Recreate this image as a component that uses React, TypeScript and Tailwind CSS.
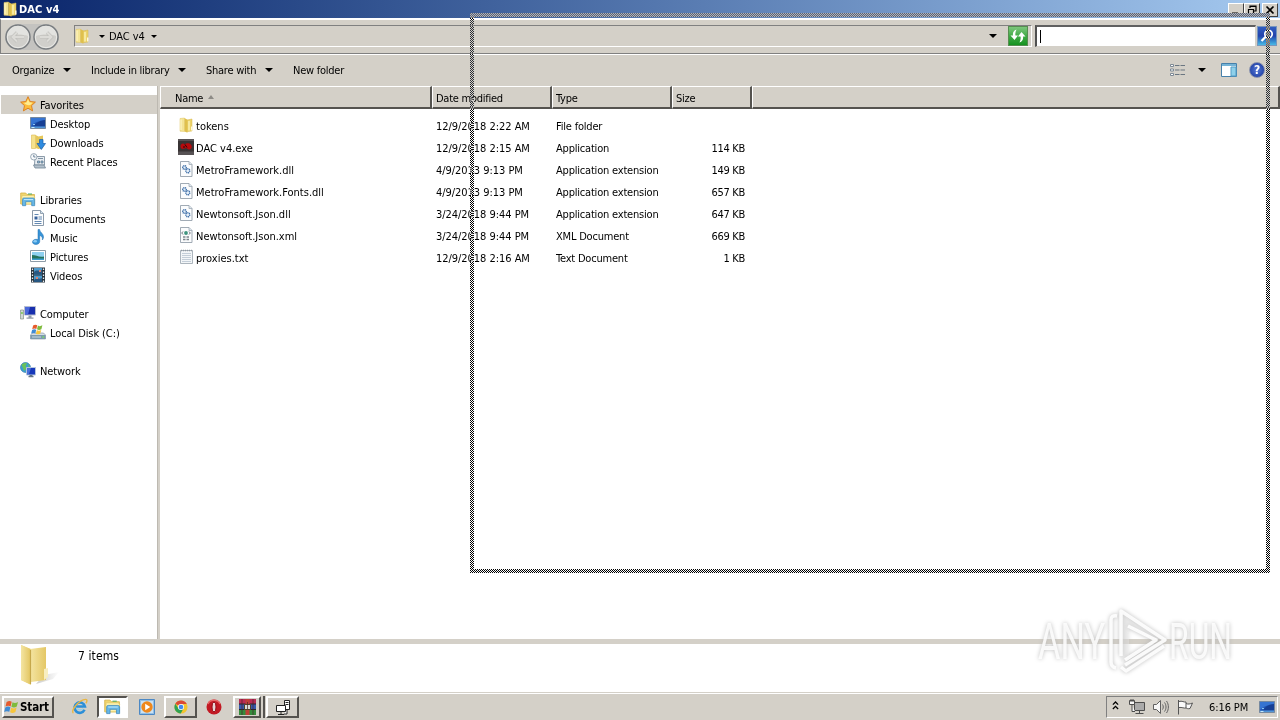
import React from 'react';

type IconProps = { className?: string };

const FolderIcon: React.FC<IconProps> = ({ className = 'size-4' }) => (
  <svg viewBox="0 0 16 16" className={`${className} shrink-0`}>
    <path d="M8 3.2 14 2v12l-6 .8z" fill="#ecd36c" stroke="#d5b548" strokeWidth=".5" />
    <path d="M2 1.5 6.5 1v13.5L2 14.2z" fill="#f4e495" stroke="#e0c560" strokeWidth=".5" />
    <path d="M6.5 1 9.5 2.8v12.6l-3-1z" fill="#dfc04d" />
    <path d="M3 2.5v10.5" stroke="#fff8cd" strokeWidth="1" />
    <path d="M11 4v9.500" stroke="#faf0b0" strokeWidth="1.500" />
    <path d="M13 9.500h1.500v4H13z" fill="#fff8dc" />
  </svg>
);

const StarIcon = () => (
  <svg viewBox="0 0 16 16" className="size-4 shrink-0">
    <path d="m8 .7 2.200 4.800 5.200.6-3.900 3.500 1.100 5.300L8 12.200l-4.600 2.700 1.100-5.300L.6 6.100l5.200-.6z" fill="#fcbc3c" stroke="#d97a1c" strokeWidth=".9" />
    <path d="m8 3 1.400 3.300 3.300.5-2.500 2.200-1.800.2L6 8.500 4 7l2.500-.5z" fill="#ffed91" />
  </svg>
);

const DesktopIcon = () => (
  <svg viewBox="0 0 16 16" className="size-4 shrink-0">
    <path d="M.5 2.500h15v11H.5z" fill="#2257b5" stroke="#76899f" />
    <path d="M1 3h14v3C9 5 4 8 1 11z" fill="#3674d2" />
    <path d="M4 11.500c2-4 6-6 11-6.500v6.500z" fill="#173f94" />
    <path d="M1 11.500h14V13H1z" fill="#5296d8" />
    <path d="M1.500 12.500h3" stroke="#c5e9fc" />
    <path d="M3 9.500h2" stroke="#8cc4f2" />
  </svg>
);

const DownloadsIcon = () => (
  <svg viewBox="0 0 16 16" className="size-4 shrink-0">
    <path d="M1.500 1h4v13.500h-4z" fill="#f5e28d" stroke="#dcbb52" strokeWidth=".6" />
    <path d="m5.500 1 3 1.500V15l-3-1zM8.500 2.500 13 1.500V14l-4.500 1z" fill="#e5c75b" />
    <path d="M9.500 5.500h3.500v4h2.500L11.300 15.500 7 9.500h2.500z" fill="#2f8be0" stroke="#1b5ea8" strokeWidth=".7" />
  </svg>
);

const RecentIcon = () => (
  <svg viewBox="0 0 16 16" className="size-4 shrink-0">
    <path d="M5 3.500h9.500v8.500h-10z" fill="#e8edf2" stroke="#728596" strokeWidth=".8" />
    <path d="M3.500 12h10.500l1.500 3H5z" fill="#b3c0cc" stroke="#728596" strokeWidth=".8" />
    <path d="M8 5.500h5M7.500 8h2v2h-2zM11 8h2v2h-2z" fill="#92bfdf" stroke="#657b8e" strokeWidth=".8" />
    <circle cx="3.800" cy="3.800" r="3.200" fill="#f8fafc" stroke="#8395a4" strokeWidth=".8" />
    <path d="M3.800 1.800v2.200h1.700" fill="none" stroke="#496682" strokeWidth=".8" />
  </svg>
);

const LibraryIcon: React.FC<IconProps> = ({ className = 'size-4' }) => (
  <svg viewBox="0 0 16 16" className={`${className} shrink-0`}>
    <path d="M.7 2h5l1.200 1.500h7.600V13H.7z" fill="#f0d56f" stroke="#d5b347" strokeWidth=".8" />
    <path d="M2 4.500h11.500l1.200 1.500-.7 7H1.500z" fill="#fcf2ae" stroke="#dfc35d" strokeWidth=".6" />
    <path d="M8 3h4" stroke="#4cab64" />
    <path d="M2.500 8.500c0-1 .6-1.500 1.500-1.500h9c1 0 1.700.6 1.700 1.500v6.200h-3v-4h-6v4H2.500z" fill="#66b7e7" stroke="#3c86b9" strokeWidth=".7" />
    <path d="M4 8.500h9" stroke="#b9e6fb" />
  </svg>
);

const DocumentIcon = () => (
  <svg viewBox="0 0 16 16" className="size-4 shrink-0">
    <path d="M2.500.5h8l3 3v12h-11z" fill="#fcfdfe" stroke="#7e8fa0" strokeWidth=".9" />
    <path d="M10.500.5v3h3" fill="#d4e4f1" stroke="#7e8fa0" strokeWidth=".8" />
    <path d="M4.500 4.500h4M8.500 7h3.500M8.500 9h3.500M4.500 11.500h7M4.500 13.500h7" stroke="#6288b2" />
    <path d="M4.500 6.500h3v3h-3z" fill="#345f9b" />
  </svg>
);

const MusicIcon = () => (
  <svg viewBox="0 0 16 16" className="size-4 shrink-0">
    <path d="M8 .5h1.600c.3 3 4 4 3.900 7.500 0 1.500-.7 2.400-1.200 3 .5-3-.8-4-2.600-4.500v6c0 1.800-1.700 3-3.800 3-2 0-3.400-1-3.400-2.500s1.600-2.700 3.500-2.700c.8 0 1.500.1 2 .4z" fill="#3794d8" stroke="#1f6daf" strokeWidth=".5" />
    <ellipse cx="5.200" cy="12.300" rx="1.800" ry="1.200" fill="#8bcaf3" />
  </svg>
);

const PictureIcon = () => (
  <svg viewBox="0 0 16 16" className="size-4 shrink-0">
    <path d="M.5 2.500h15v11H.5z" fill="#fff" stroke="#8e9ca7" />
    <path d="M2 4h12v8H2z" fill="#8fd0ef" />
    <path d="M2 7c4 0 7 2.500 12 1.500V12H2z" fill="#25735c" />
    <path d="M2 10.500h12V12H2z" fill="#3b9cce" />
  </svg>
);

const VideoIcon = () => (
  <svg viewBox="0 0 16 16" className="size-4 shrink-0">
    <path d="M1 .5h14v15H1z" fill="#26323c" />
    <path d="M4 1h8v6.500H4zM4 8.500h8V15H4z" fill="#4d9acb" />
    <path d="M4 5c3-3 5 0 8-2v4.500H4zM4 13c3-3 5 0 8-2v4H4z" fill="#275782" />
    <path d="M9 3h2v2H9zM6 10h2v2H6z" fill="#d78272" />
    <path d="M2.500 1.500v14M13.500 1.500v14" stroke="#e8edf2" strokeWidth="1.300" strokeDasharray="1.500 1.500" />
  </svg>
);

const ComputerIcon = () => (
  <svg viewBox="0 0 16 16" className="size-4 shrink-0">
    <path d="M.5 5h3v9h-3z" fill="#d2d9d5" stroke="#849386" strokeWidth=".7" />
    <path d="M1.200 7h1.500v2H1.200z" fill="#79c952" />
    <path d="M4.500 1.500h11v8.500h-11z" fill="#182fae" stroke="#b7bed0" />
    <path d="M5 2h5L8 9.500H5z" fill="#4a68da" />
    <path d="M8.500 10.500h3v2h-3zM6.500 12.500h7v1.200h-7z" fill="#929caa" />
  </svg>
);

const WindowsFlag: React.FC<IconProps> = ({ className = 'size-4' }) => (
  <svg viewBox="0 0 16 16" className={`${className} shrink-0`}>
    <path d="M2.600 3c2-1.300 3.700-1.100 5.100-.2L6.600 7.400C5 6.500 3.400 6.500 1.500 7.600z" fill="#e65b2c" />
    <path d="M8.500 3.200c1.600.9 3.400 1 5.500-.3l-1.200 4.700c-2 1.200-3.800 1.100-5.400.2z" fill="#7fbb3d" />
    <path d="M1.300 8.500c1.900-1.200 3.500-1.100 5.100-.2l-1.100 4.500C3.700 12 2 12 .2 13z" fill="#3f8bd4" />
    <path d="M7.200 8.700c1.600.9 3.400 1 5.400-.2l-1.200 4.600c-2 1.200-3.800 1.100-5.300.2z" fill="#f6c53c" />
  </svg>
);

const DiskIcon = () => (
  <span className="relative block size-4 shrink-0">
    <svg viewBox="0 0 16 16" className="size-4">
      <path d="m2.500 9-2 2v4h15v-4l-2-2z" fill="#d4dde5" stroke="#7e8c9a" strokeWidth=".6" />
      <path d="M.5 11h15v4H.5z" fill="#7d9bae" />
      <path d="M2 13h9" stroke="#c7d8e3" />
      <path d="M12.500 12.300h1.600v1.500h-1.600z" fill="#78e05a" />
    </svg>
    <WindowsFlag className="absolute left-px top-[-1px] size-[13px]" />
  </span>
);

const NetworkIcon = () => (
  <svg viewBox="0 0 16 16" className="size-4 shrink-0">
    <circle cx="5.500" cy="5.500" r="5" fill="#3c9ed1" stroke="#2770a3" strokeWidth=".6" />
    <path d="M1.500 3C3 1 6 .7 7 1.500L5.500 4 7 6l-3 3-1-3zM8 2l2 2-1 2z" fill="#6ac15b" />
    <path d="M6.500 5.500h9V13h-9z" fill="#1738ba" stroke="#b6c6dd" />
    <path d="M7 6h4l-2 6H7z" fill="#476eda" />
    <path d="M9.500 13h3v1h1v1.300h-5V14h1z" fill="#647586" />
  </svg>
);

const ExeIcon = () => (
  <svg viewBox="0 0 16 16" className="size-4 shrink-0">
    <path d="M0 0h16v16H0z" fill="#383334" />
    <path d="M0 0h16v2H0zM0 12.500h16V16H0z" fill="#575254" />
    <path d="M2.500 8C2 5 5 3.500 7 5.500c1-1.500 5-2 6.500 1 .8 2-.5 4-2.500 4-1.500 0-2-1.500-3-1.500s-1.500 1-3 1c-1.300 0-2.300-.8-2.500-2z" fill="#b80a0d" />
    <path d="m7 5.500 2 3M5 8h2" stroke="#2a0507" strokeWidth="1" fill="none" />
  </svg>
);

const SheetIcon: React.FC<{ kind: 'dll' | 'xml' }> = ({ kind }) => (
  <svg viewBox="0 0 16 16" className="size-4 shrink-0">
    <path d="M2.500.5h8.500l3 3v12H2.500z" fill="#fbfcfd" stroke="#96a2ad" strokeWidth=".9" />
    <path d="M11 .5v3h3" fill="#dce5ed" stroke="#96a2ad" strokeWidth=".7" />
    {kind === 'dll' ? (
      <g fill="#e4eef8" stroke="#4272aa">
        <circle cx="6.500" cy="6.500" r="1.800" strokeWidth="1.400" strokeDasharray="1.100 .5" />
        <circle cx="9.800" cy="9.800" r="2" strokeWidth="1.400" strokeDasharray="1.100 .5" />
      </g>
    ) : (
      <g fill="none">
        <path d="m5 4.500-1.300 1.500L5 7.500M11 4.500l1.300 1.500L11 7.500" stroke="#696f7b" />
        <circle cx="8" cy="6" r="1.900" fill="#3f947f" />
        <path d="M5 10h6M5 12.500h6" stroke="#7d858d" strokeWidth="1.400" strokeDasharray="2.500 1" />
      </g>
    )}
  </svg>
);

const TextFileIcon = () => (
  <svg viewBox="0 0 16 16" className="size-4 shrink-0">
    <path d="M2.500 1.500h12v13h-12z" fill="#f3f6f8" stroke="#a3adb6" strokeWidth=".9" />
    <path d="M3 1.500h11" stroke="#929ba3" strokeWidth="1.500" strokeDasharray="1 1" />
    <path d="M4 4.500h9M4 6.500h9M4 8.500h9M4 10.500h9M4 12.500h9" stroke="#c4ced8" />
  </svg>
);

const Caret: React.FC<{ small?: boolean }> = ({ small }) => (
  <svg viewBox="0 0 8 4" className={small ? 'h-[3px] w-[6px] shrink-0' : 'h-[4px] w-[8px] shrink-0'}>
    <path d="M0 0h8L4 4z" fill="#000" />
  </svg>
);

const HistoryButton: React.FC<{ flip?: boolean }> = ({ flip }) => (
  <svg viewBox="0 0 26 26" className="size-[26px] shrink-0">
    <circle cx="13" cy="13" r="12" fill="#d0cfcb" stroke="#797d80" strokeWidth="1.500" />
    <circle cx="13" cy="13" r="10.700" fill="none" stroke="#f0f0ee" strokeWidth=".8" />
    <path d="M2.800 12a10.200 10 0 0 1 20.400 0c-5-2-15-2-20.400 0z" fill="#e3e3e0" />
    <path d={flip ? 'M7 13h11M14 8.500l4.500 4.500-4.500 4.500' : 'M19 13H8M12 8.500 7.500 13l4.500 4.500'} fill="none" stroke="#bfbfbb" strokeWidth="3.200" />
    <path d={flip ? 'M7 13h11M14 8.500l4.500 4.500-4.500 4.500' : 'M19 13H8M12 8.500 7.500 13l4.500 4.500'} fill="none" stroke="#dcdbd7" strokeWidth="2" />
  </svg>
);

const navItems: { label: string; icon: React.ReactNode; level: number; active?: boolean }[][] = [
  [
    { label: 'Favorites', icon: <StarIcon />, level: 0, active: true },
    { label: 'Desktop', icon: <DesktopIcon />, level: 1 },
    { label: 'Downloads', icon: <DownloadsIcon />, level: 1 },
    { label: 'Recent Places', icon: <RecentIcon />, level: 1 },
  ],
  [
    { label: 'Libraries', icon: <LibraryIcon />, level: 0 },
    { label: 'Documents', icon: <DocumentIcon />, level: 1 },
    { label: 'Music', icon: <MusicIcon />, level: 1 },
    { label: 'Pictures', icon: <PictureIcon />, level: 1 },
    { label: 'Videos', icon: <VideoIcon />, level: 1 },
  ],
  [
    { label: 'Computer', icon: <ComputerIcon />, level: 0 },
    { label: 'Local Disk (C:)', icon: <DiskIcon />, level: 1 },
  ],
  [{ label: 'Network', icon: <NetworkIcon />, level: 0 }],
];

const files = [
  { name: 'tokens', date: '12/9/2018 2:22 AM', type: 'File folder', size: '', icon: <FolderIcon /> },
  { name: 'DAC v4.exe', date: '12/9/2018 2:15 AM', type: 'Application', size: '114 KB', icon: <ExeIcon /> },
  { name: 'MetroFramework.dll', date: '4/9/2013 9:13 PM', type: 'Application extension', size: '149 KB', icon: <SheetIcon kind="dll" /> },
  { name: 'MetroFramework.Fonts.dll', date: '4/9/2013 9:13 PM', type: 'Application extension', size: '657 KB', icon: <SheetIcon kind="dll" /> },
  { name: 'Newtonsoft.Json.dll', date: '3/24/2018 9:44 PM', type: 'Application extension', size: '647 KB', icon: <SheetIcon kind="dll" /> },
  { name: 'Newtonsoft.Json.xml', date: '3/24/2018 9:44 PM', type: 'XML Document', size: '669 KB', icon: <SheetIcon kind="xml" /> },
  { name: 'proxies.txt', date: '12/9/2018 2:16 AM', type: 'Text Document', size: '1 KB', icon: <TextFileIcon /> },
];

const TitleBar = () => (
  <div className="flex h-[18px] shrink-0 items-center bg-linear-to-r from-[#0a246a] to-[#a6caf0] pl-[2px] pr-[2px]">
    <FolderIcon />
    <span className="ml-px text-[11px] font-bold tracking-[0.1px] text-white">DAC v4</span>
    <div className="ml-auto mt-px flex h-[14px]">
      {['min', 'restore', 'close'].map((kind) => (
        <div
          key={kind}
          className={`flex h-[14px] w-4 items-center justify-center border border-t-white border-l-white border-r-[#404040] border-b-[#404040] bg-[#d4d0c8] ${kind === 'close' ? 'ml-[2px]' : ''}`}
        >
          <svg viewBox="0 0 12 12" className="size-3" fill="none" stroke="#000">
            {kind === 'min' && <path d="M2 9.500h6" strokeWidth="2" />}
            {kind === 'restore' && <path d="M4 4V2h6v5H8M4 2.500h6M2 5.500h6M2.500 5v5h5V5" strokeWidth="1.200" />}
            {kind === 'close' && <path d="m2.500 2.500 7 7M9.500 2.500l-7 7" strokeWidth="1.700" />}
          </svg>
        </div>
      ))}
    </div>
  </div>
);

const AddressBar = () => (
  <div className="flex h-9 shrink-0 items-center border-b border-l border-t-2 border-b-[#808080] border-l-[#808080] border-t-white pl-1 pr-[2px]">
    <div className="flex w-[54px] shrink-0 rounded-full bg-[#c4c3c0]">
      <HistoryButton />
      <span className="ml-[2px]"><HistoryButton flip /></span>
    </div>
    <div className="ml-[15px] mb-px flex h-[22px] w-[958px] shrink-0 items-center border border-b-white border-l-[#808080] border-r-white border-t-[#808080]">
      <span className="-ml-px flex"><FolderIcon /></span>
      <span className="ml-[9px] flex"><Caret small /></span>
      <span className="ml-[4px] w-[38px]">DAC v4</span>
      <span className="ml-[4px] flex"><Caret small /></span>
      <span className="ml-auto mr-[34px] flex"><Caret /></span>
    </div>
    <div className="-ml-[24px] mb-px flex h-5 w-5 shrink-0 items-center justify-center border border-[#568d50] bg-linear-to-b from-[#7cc67c] via-[#3fab45] to-[#12921f]">
      <svg viewBox="0 0 18 18" className="size-[18px]" fill="#fff">
        <path d="M7.500 2.500C4.500 3.500 3.500 6 4 8.500H1.500L5.500 13l3.500-4.500H6.500C6 6.500 6.500 4.500 7.500 2.500zM10.500 15.500c3-1 4-3.500 3.500-6h2.500L12.500 5 9 9.500h2.500c.5 2 0 4-1 6z" />
      </svg>
    </div>
    <div className="ml-[7px] mb-px flex h-[22px] w-[221px] shrink-0 items-center border-b border-l-2 border-r border-t-2 border-b-[#d4d0c8] border-l-[#505050] border-r-[#d4d0c8] border-t-[#606060] bg-white">
      <span className="ml-[3px] h-[13px] w-px bg-black" />
    </div>
    <div className="ml-px mb-px flex h-5 w-5 shrink-0 items-center justify-center border border-[#7796bd] bg-linear-to-b from-[#305dc0] via-[#2443ac] to-[#49bae6]">
      <svg viewBox="0 0 18 18" className="size-[18px]" fill="none" stroke="#fff">
        <circle cx="10.500" cy="7" r="3.700" strokeWidth="1.700" />
        <path d="m7.700 9.700-4.200 4.300" strokeWidth="2.300" />
      </svg>
    </div>
  </div>
);

const Toolbar = () => (
  <div className="flex h-8 shrink-0 items-center border-t border-t-white pb-px pl-3 tracking-[-0.25px]">
    <span className="w-[44px]">Organize</span>
    <span className="ml-[7px] flex"><Caret /></span>
    <span className="ml-[20px] w-[80px]">Include in library</span>
    <span className="ml-[7px] flex"><Caret /></span>
    <span className="ml-[20px] w-[52px]">Share with</span>
    <span className="ml-[7px] flex"><Caret /></span>
    <span className="ml-[20px]">New folder</span>
    <div className="ml-auto mr-[15px] flex items-center">
      <svg viewBox="0 0 16 14" className="h-[14px] w-4" fill="none">
        <path d="M.5 1.500h3v2h-3zM.5 6h3v2h-3zM.5 10.500h3v2h-3z" fill="#fff" stroke="#7d8995" />
        <path d="M5 2.500h4.500M10.500 2.500H15M5 7h4.500M10.500 7H15M5 11.500h4.500M10.500 11.500H15" stroke="#6a7681" />
      </svg>
      <span className="ml-[12px] flex"><Caret /></span>
      <svg viewBox="0 0 16 14" className="ml-[15px] h-[14px] w-4">
        <path d="M.5.500h15v13H.5z" fill="#fff" stroke="#4680aa" />
        <path d="M1 1h14v2H1z" fill="#75b4d7" />
        <path d="M10 4h5v9h-5z" fill="#8ed0ea" stroke="#529bc4" />
      </svg>
      <div className="ml-[12px] flex size-4 items-center justify-center rounded-full border border-[#8790ae] bg-radial from-[#5577d5] to-[#16339b] text-[12px] font-bold leading-none text-white">?</div>
    </div>
  </div>
);

const NavigationPane = () => (
  <div className="flex w-[157px] shrink-0 flex-col gap-[19px] bg-white pt-[9px]">
    {navItems.map((group, index) => (
      <div key={index}>
        {group.map((item) => (
          <div
            key={item.label}
            className={`ml-px flex h-[19px] items-center gap-1 ${item.level ? 'pl-[29px]' : 'pl-[19px]'} ${item.active ? 'bg-[#d4d0c8]' : ''}`}
          >
            <span className="-mt-px flex">{item.icon}</span>
            <span className="pt-[2px]">{item.label}</span>
          </div>
        ))}
      </div>
    ))}
  </div>
);

const HeaderCell: React.FC<{ className: string; children?: React.ReactNode }> = ({ className, children }) => (
  <div className={`flex items-center border-b-2 border-l border-t border-b-[#55534f] border-l-white border-t-white pt-[2px] tracking-[-0.25px] ${className}`}>{children}</div>
);

const FileList = () => (
  <div className="flex min-w-0 grow flex-col bg-white">
    <div className="flex h-[23px] shrink-0 bg-[#d4d0c8]">
      <HeaderCell className="w-[272px] border-r-2 border-r-[#55534f] pl-[14px]">
        Name
        <svg viewBox="0 0 6 4" className="ml-[5px] mb-[3px] h-[4px] w-[6px]"><path d="M3 0 6 4H0z" fill="#8d8b86" /></svg>
      </HeaderCell>
      <HeaderCell className="w-[120px] border-r-2 border-r-[#55534f] pl-[3px]">Date modified</HeaderCell>
      <HeaderCell className="w-[120px] border-r-2 border-r-[#55534f] pl-[3px]">Type</HeaderCell>
      <HeaderCell className="w-[80px] border-r-2 border-r-[#55534f] pl-[3px]">Size</HeaderCell>
      <HeaderCell className="grow border-r-2 border-r-[#55534f]" />
    </div>
    <div className="mt-[6px]">
      {files.map((file) => (
        <div key={file.name} className="flex h-[22px] items-center pl-[18px]">
          <span className="-mt-[2px] flex">{file.icon}</span>
          <span className="ml-[2px] w-[240px] tracking-normal">{file.name}</span>
          <span className="w-[120px] tracking-[-0.04px]">{file.date}</span>
          <span className="w-[120px] tracking-[-0.2px]">{file.type}</span>
          <span className="w-[69px] text-right tracking-[-0.3px]">{file.size}</span>
        </div>
      ))}
    </div>
  </div>
);

const DetailsPane = () => (
  <div className="flex h-[48px] shrink-0 bg-white">
    <svg viewBox="0 0 42 46" className="ml-[18px] h-[46px] w-[42px]">
      <defs>
        <linearGradient id="leaf" x1="0" x2="1">
          <stop offset="0" stopColor="#f4e5a3" />
          <stop offset="1" stopColor="#e4c765" />
        </linearGradient>
        <linearGradient id="floor" x1="0" x2="1">
          <stop offset="0" stopColor="#a9a9a9" />
          <stop offset="1" stopColor="#fff" />
        </linearGradient>
      </defs>
      <path d="m26 31 15-3-6 7-17 5z" fill="url(#floor)" opacity=".6" />
      <path d="m12 5 16-2v33l-15 2z" fill="url(#leaf)" />
      <path d="m26 25 4-1v9l-4 3z" fill="#f8eec0" />
      <path d="M3 1 13 5v36L3 36z" fill="#ecd684" />
      <path d="M3 1 12 5v35L3 36z" fill="url(#leaf)" />
      <path d="M12.500 6v34" stroke="#c6a84c" strokeWidth="1.200" />
    </svg>
    <span className="ml-[18px] mt-[6px] text-[12px] tracking-[0.1px]">7 items</span>
  </div>
);

const raised = 'border-2 border-t-white border-l-white border-r-[#55534f] border-b-[#55534f]';

const Taskbar = () => (
  <div className="flex h-[28px] shrink-0 items-center border-t border-t-[#d4d0c8] bg-[#d4d0c8] pl-[2px] shadow-[inset_0_1px_0_#fff]">
    <div className={`flex h-[22px] w-[52px] items-center ${raised}`}>
      <WindowsFlag className="size-[16px]" />
      <span className="pt-[2px] text-[11.500px] font-bold tracking-[-0.1px]">Start</span>
    </div>
    <div className="ml-[16px] mr-px flex w-[18px] justify-center">
      <svg viewBox="0 0 18 18" className="size-[17px]" fill="none">
        <path d="M14.300 12.500A5.500 5.500 0 1 1 14.700 9H5" stroke="#2c8fd8" strokeWidth="2.800" />
        <path d="M13 11a5 5 0 0 1-8-1" stroke="#83d1f5" strokeWidth="1" />
        <path d="M2.500 16C-1 14 8 2 15.500 1.500c2-.1 1.500 2.500.3 4" stroke="#e9b642" strokeWidth="1.500" />
      </svg>
    </div>
    <div className="ml-[8px] flex h-[22px] w-[31px] items-center justify-center border-2 border-b-white border-l-[#55534f] border-r-white border-t-[#55534f] bg-white">
      <LibraryIcon className="size-[17px]" />
    </div>
    <div className="ml-[10px] flex w-[17px] justify-center">
      <svg viewBox="0 0 16 16" className="size-4">
        <path d="M.5.500h15v15H.5z" fill="#91bfe6" stroke="#4c88c4" />
        <path d="M2 2h12v12H2z" fill="#cae1f3" />
        <circle cx="8" cy="8" r="5.700" fill="#ee881d" />
        <path d="m6.200 4.800 5 3.200-5 3.200z" fill="#fff" />
      </svg>
    </div>
    <div className={`ml-[9px] flex h-[22px] w-[33px] items-center justify-center ${raised}`}>
      <svg viewBox="0 0 16 16" className="size-[14px]">
        <circle cx="8" cy="8" r="7.500" fill="#f4c52f" />
        <path d="M8 8 1.500 4.200A7.500 7.500 0 0 1 14.600 4.500H8z" fill="#db4937" />
        <path d="M1.500 4.200A7.500 7.500 0 0 0 7.700 15.500L11 9.500 5 9.700z" fill="#30a253" />
        <circle cx="8" cy="8" r="3.500" fill="#fff" />
        <circle cx="8" cy="8" r="2.700" fill="#448aee" />
      </svg>
    </div>
    <div className="ml-[9px] mr-px flex w-[16px] justify-center">
      <svg viewBox="0 0 16 16" className="size-4">
        <circle cx="8" cy="8" r="7.500" fill="#c21923" />
        <path d="M2 5c2-5 10-5 12 0" stroke="#e76767" strokeWidth="1.500" fill="none" />
        <ellipse cx="8" cy="8" rx="2" ry="5" fill="#e8d5d4" stroke="#940914" />
      </svg>
    </div>
    <div className={`ml-[10px] flex h-[22px] w-[28px] items-center justify-center ${raised}`}>
      <svg viewBox="0 0 17 16" className="h-4 w-[17px]">
        <path d="M0 0h17v5H0z" fill="#b92b54" />
        <path d="M0 5h17v5H0z" fill="#3659ac" />
        <path d="M0 10h17v6H0z" fill="#348b3c" />
        <path d="M0 5h17M0 10.500h17" stroke="#28242c" />
        <path d="M6.500 0h4v16h-4z" fill="#bd3f37" />
        <path d="M5.500 5.500h6v5h-6z" fill="#d9dad6" stroke="#514229" />
        <path d="M8.500 3v7M3 0v16M14 0v16" stroke="#48232b" strokeWidth=".7" />
      </svg>
    </div>
    <div className="h-[22px] w-[4px] border-r-2 border-r-[#55534f]" />
    <div className={`ml-px flex h-[22px] w-[33px] items-center justify-center ${raised}`}>
      <svg viewBox="0 0 16 16" className="size-4" fill="#fff" stroke="#222">
        <path d="M9.500 1.500h5v9h-5zM10.500 3.500h3M10.500 5.500h3" />
        <path d="M1.500 6.500h9v6h-9zM6 12.500V15M3 15.500h6M12 11v4H9" />
      </svg>
    </div>
    <div className="ml-auto mr-[2px] flex h-[22px] w-[172px] items-center border border-b-white border-l-[#808080] border-r-white border-t-[#808080]">
      <svg viewBox="0 0 8 10" className="ml-[5px] mb-[2px] h-[9px] w-[7px]" fill="none" stroke="#000" strokeWidth="1.500">
        <path d="m1 4 3-3 3 3M1 9l3-3 3 3" />
      </svg>
      <svg viewBox="0 0 16 16" className="ml-[10px] size-4" fill="#f7f7f7" stroke="#4d4d4d">
        <path d="M5.500 3.500h10v8h-10z" fill="#aaa" />
        <path d="M6.500 14.500h8M10.500 12v2.500M.5 1.500h5v4h-5zM2 0v3M4 0v3M3 5.500v7h3" />
      </svg>
      <svg viewBox="0 0 16 16" className="ml-[8px] size-4" fill="#f7f7f7" stroke="#606060">
        <path d="M.5 5.500h3l4-4v13l-4-4h-3z" />
        <path d="M9.500 5.500c1 1.500 1 3.500 0 5M11.500 3.500c2 2.500 2 6.500 0 9M13.500 2c2.500 3.500 2.500 8.500 0 12" fill="none" />
      </svg>
      <svg viewBox="0 0 17 16" className="ml-[8px] h-4 w-[17px]" fill="#fafafa" stroke="#555">
        <path d="M1.500 1v14.500M2 2.500c3-1 5 1 7 .5v6c-2 .5-4-1-7-.5M9 4.500c2 1 4 .5 6.500-.5L13 9.500c-2 .5-3 0-4-.5" />
      </svg>
      <span className="ml-[15px] w-[42px] whitespace-nowrap pt-px">6:16 PM</span>
      <span className="ml-[8px] flex"><DesktopIcon /></span>
    </div>
  </div>
);

const checker = 'absolute bg-[conic-gradient(#fff_25%,#000_0_50%,#fff_0_75%,#000_0)] bg-[length:2px_2px]';

// Outline drawn while the window is being dragged, it inverts whatever lies below
const DragOutline = () => (
  <>
    <div className="pointer-events-none absolute left-[470px] top-[13px] h-[4px] w-[800px] bg-[conic-gradient(#b4b4b4_25%,#56617a_0_50%,#b4b4b4_0_75%,#56617a_0)] bg-[length:2px_2px]" />
    <div className="pointer-events-none absolute left-[470px] top-[17px] h-[556px] w-[800px] mix-blend-difference">
      <div className={`${checker} inset-x-0 bottom-0 h-1`} />
      <div className={`${checker} bottom-1 left-0 top-0 w-1`} />
      <div className={`${checker} bottom-1 right-0 top-0 w-1`} />
    </div>
  </>
);

const Watermark = () => (
  <svg viewBox="0 0 220 80" className="pointer-events-none absolute left-[1034px] top-[604px] h-[80px] w-[220px] overflow-visible drop-shadow-[0_0_2px_#b4b4b4]">
    <g fill="#fff" fillOpacity=".85" fontFamily="Roboto, sans-serif" fontSize="50" letterSpacing="0">
      <text x="4" y="55" textLength="67" lengthAdjust="spacingAndGlyphs">ANY</text>
      <text x="135" y="55" textLength="63" lengthAdjust="spacingAndGlyphs">RUN</text>
    </g>
    <path d="M87 8v50l8-5V22l28 17z" fill="#ececec" fillOpacity=".35" />
    <g fill="none" stroke="#fff" strokeOpacity=".9" strokeWidth="3.500" strokeLinejoin="round">
      <path d="M83 12q-6-1-6 4v42q0 5 5 6" />
      <path d="M87 52V7l44 29-40 25" />
      <path d="m94 22 28 14-31 20M87 63l5 4 38-25" />
    </g>
  </svg>
);

const App: React.FC = () => (
  <div className="relative flex h-[720px] w-[1280px] flex-col overflow-hidden whitespace-nowrap bg-[#d4d0c8] font-['DejaVu_Sans_Condensed','DejaVu_Sans',sans-serif] text-[11px] leading-none tracking-[-0.1px] text-black">
    <TitleBar />
    <AddressBar />
    <Toolbar />
    <div className="flex h-[553px] shrink-0">
      <NavigationPane />
      <div className="w-[3px] shrink-0 border-l border-l-[#bdb9b1] bg-[#d4d0c8]" />
      <FileList />
    </div>
    <div className="h-[5px] shrink-0 bg-[#d4d0c8]" />
    <DetailsPane />
    <Taskbar />
    <DragOutline />
    <Watermark />
  </div>
);

export default App;
